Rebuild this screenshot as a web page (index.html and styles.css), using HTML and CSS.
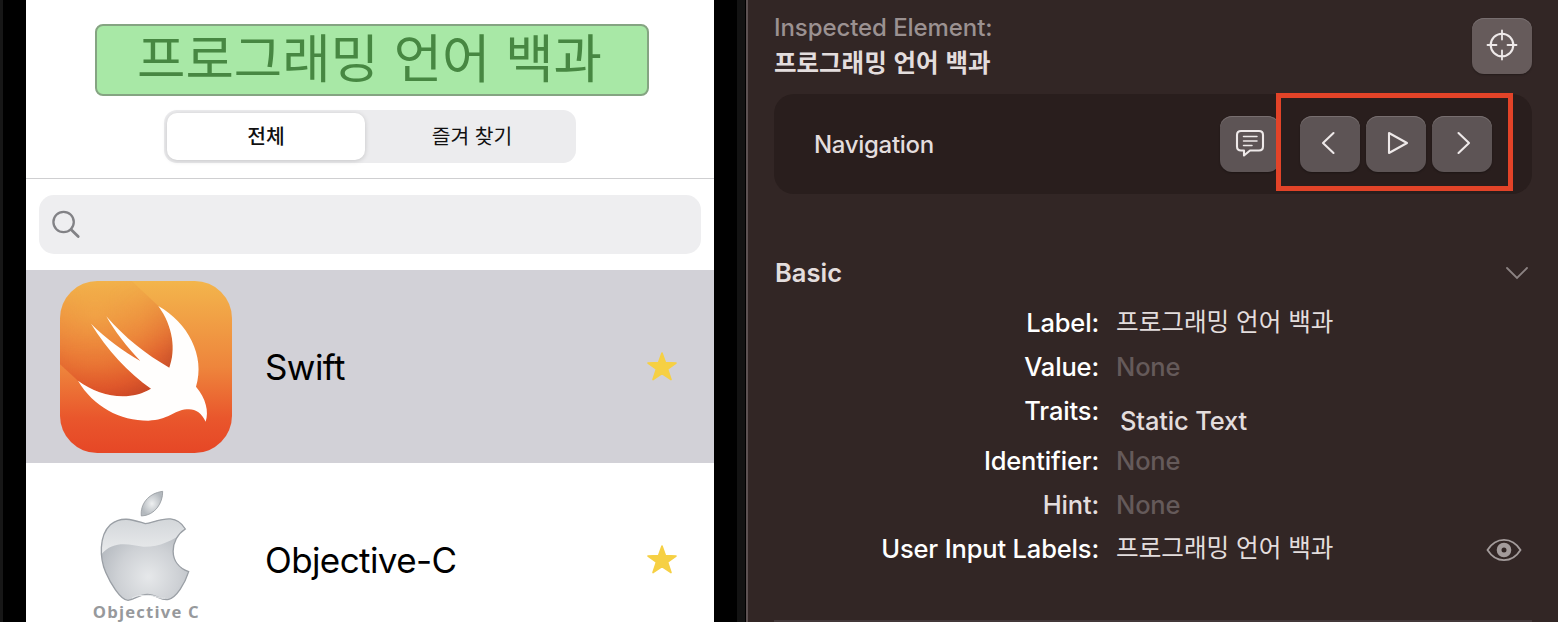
FILE: index.html
```html
<!DOCTYPE html>
<html lang="ko">
<head>
<meta charset="utf-8">
<title>Accessibility Inspector</title>
<link rel="stylesheet" href="styles.css">
</head>
<body>
<main class="app">
  <section class="phone">
    <div class="screen">
      <header class="top">
        <h1 class="title"><span>프로그래밍 언어 백과</span></h1>
        <div class="segments">
          <div class="segment active">전체</div>
          <div class="segment other">즐겨 찾기</div>
        </div>
      </header>
      <div class="search-wrap">
        <div class="search">
          <svg width="30" height="30" viewBox="0 0 30 30" fill="none" stroke="#828286" stroke-width="2.3" stroke-linecap="round"><circle cx="12.6" cy="12" r="10.2"/><path d="M20 19.400L27.200 26.400" stroke-width="2.8"/></svg>
        </div>
      </div>
      <div class="row selected">
        <svg class="logo" viewBox="60 33 516 516">
          <defs>
            <linearGradient id="sw" x1="0" y1="0" x2="0" y2="1"><stop offset="0" stop-color="#f3b54c"/><stop offset=".5" stop-color="#ee853c"/><stop offset=".8" stop-color="#e9562c"/><stop offset="1" stop-color="#e64726"/></linearGradient>
            <radialGradient id="sh" gradientUnits="userSpaceOnUse" cx="165" cy="135" r="275"><stop offset="0" stop-color="#e05a20" stop-opacity="0"/><stop offset=".5" stop-color="#dd4a20" stop-opacity=".25"/><stop offset=".8" stop-color="#d23c20" stop-opacity=".5"/><stop offset="1" stop-color="#b43420" stop-opacity=".65"/></radialGradient>
            <linearGradient id="fade" x1="0" y1="0" x2="0" y2="1"><stop offset="0" stop-color="#fff" stop-opacity=".15"/><stop offset=".6" stop-color="#fff"/></linearGradient>
            <mask id="mk"><rect x="60" y="33" width="516" height="370" fill="url(#fade)"/></mask>
            <clipPath id="tile"><rect x="60" y="33" width="516" height="516" rx="112"/></clipPath>
          </defs>
          <g clip-path="url(#tile)">
            <rect x="60" y="33" width="516" height="516" fill="url(#sw)"/>
            <path mask="url(#mk)" fill="url(#sh)" d="M60 33H275L355 108C400 170 408 240 388 293L333 356C260 400 170 375 114 332L60 283Z"/>
            <path fill="#fffefd" d="M355 108C443 157 497 258 468 350C498 385 507 425 497 455C484 427 464 415 440 418C400 422 385 450 325 452C240 452 160 410 114 332C180 381 268 395 333 356C265 308 200 238 153 161C200 208 250 243 301 273C260 230 224 184 199 139C253 202 320 255 388 293C408 240 400 170 355 108Z"/>
          </g>
        </svg>
        <span class="name swift">Swift</span>
        <svg class="star" viewBox="0 0 32 31"><path d="M16 2L19.4 11.6L30 12L21.6 18.2L25 28.6L16 22.5L7 28.6L10.4 18.2L2 12L12.6 11.6Z"/></svg>
      </div>
      <div class="row">
        <svg class="logo" viewBox="0 12 516 516">
          <defs>
            <radialGradient id="ap" gradientUnits="userSpaceOnUse" cx="265" cy="320" r="165"><stop offset="0" stop-color="#e6e8ea"/><stop offset=".55" stop-color="#ced1d5"/><stop offset="1" stop-color="#b3b8be"/></radialGradient>
            <linearGradient id="gl" x1="0" y1="0" x2="0" y2="1"><stop offset="0" stop-color="#cdd1d5"/><stop offset="1" stop-color="#eff0f1"/></linearGradient>
            <radialGradient id="lf"><stop offset="0" stop-color="#eef0f1"/><stop offset="1" stop-color="#b4b9be"/></radialGradient>
            <clipPath id="body"><path d="M256 161C292 156 343 123 376 177C329 207 322 282 386 305C375 340 350 382 326 388C302 394 291 373 262 373C238 373 226 388 204 391C181 391 149 335 137 307C119 265 116 197 151 164C188 134 228 153 256 161Z"/></clipPath>
          </defs>
          <path d="M244 138C240 105 263 70 308 64C309 99 284 137 244 138Z" fill="url(#lf)" stroke="#969ba0" stroke-width="2.5"/>
          <g clip-path="url(#body)">
            <rect x="115" y="135" width="280" height="265" fill="url(#ap)"/>
            <path d="M110 275C145 205 205 223 250 230C300 231 332 214 390 178V120H110Z" fill="url(#gl)"/>
          </g>
          <path d="M256 161C292 156 343 123 376 177C329 207 322 282 386 305C375 340 350 382 326 388C302 394 291 373 262 373C238 373 226 388 204 391C181 391 149 335 137 307C119 265 116 197 151 164C188 134 228 153 256 161Z" fill="none" stroke="#9a9fa5" stroke-width="4"/>
          <path d="M216 384C234 374 246 377 266 376C290 377 301 388 316 384" fill="none" stroke="#e6e8ea" stroke-width="3"/>
          <text class="caption" x="98" y="443" textLength="318">Objective C</text>
        </svg>
        <span class="name objc">Objective-C</span>
        <svg class="star" viewBox="0 0 32 31"><path d="M16 2L19.4 11.6L30 12L21.6 18.2L25 28.6L16 22.5L7 28.6L10.4 18.2L2 12L12.6 11.6Z"/></svg>
      </div>
    </div>
  </section>
  <section class="inspector">
    <header class="inspected">
      <div>
        <div class="muted">Inspected Element:</div>
        <div class="element">프로그래밍 언어 백과</div>
      </div>
      <button class="btn target"><svg width="32" height="32" viewBox="0 0 32 32"><circle cx="16" cy="16" r="11.3"/><path d="M16 1.500V10.500M16 21.500V30.500M1.500 16H10.500M21.500 16H30.500" stroke-width="1.8"/></svg></button>
    </header>
    <div class="nav">
      <span class="nav-label">Navigation</span>
      <button class="btn"><svg width="30" height="28" viewBox="0 0 30 28"><path d="M6 2H24Q28 2 28 6V17.500Q28 21.500 24 21.500H15L9 26.500V21.500H6Q2 21.500 2 17.500V6Q2 2 6 2Z"/><path d="M8.500 7.600H22M8.500 12H22M8.500 16.400H17" stroke-width="1.500"/></svg></button>
      <div class="steps">
        <button class="btn prev"><svg width="14" height="24" viewBox="0 0 14 24"><path d="M12.500 2L2 12L12.500 22"/></svg></button>
        <button class="btn play"><svg width="22" height="24" viewBox="0 0 22 24"><path d="M2 2V22L20 12Z"/></svg></button>
        <button class="btn next"><svg width="14" height="24" viewBox="0 0 14 24"><path d="M1.500 2L12 12L1.500 22"/></svg></button>
        <div class="highlight"></div>
      </div>
    </div>
    <div class="basic-head">
      <h2 class="basic">Basic</h2>
      <svg width="24" height="14" viewBox="0 0 24 14" fill="none" stroke="#8c8383" stroke-width="1.800" stroke-linecap="round"><path d="M2 2L12 12L22 2"/></svg>
    </div>
    <dl class="props">
      <dt>Label:</dt><dd class="ko"><span>프로그래밍 언어 백과</span></dd>
      <dt>Value:</dt><dd class="none">None</dd>
      <dt>Traits:</dt><dd class="trait">Static Text</dd>
      <dt>Identifier:</dt><dd class="none">None</dd>
      <dt class="soft">Hint:</dt><dd class="none">None</dd>
      <dt>User Input Labels:</dt><dd class="ko"><span>프로그래밍 언어 백과</span>
        <svg width="36" height="24" viewBox="0 0 36 24"><path d="M1.500 12C10 -1.500 26 -1.500 34.500 12C26 25.500 10 25.500 1.500 12Z" fill="none" stroke="#a39b9b" stroke-width="1.800"/><circle cx="18" cy="12" r="4.900" fill="none" stroke="#a39b9b" stroke-width="4.800"/></svg>
      </dd>
    </dl>
    <div class="divider"></div>
  </section>
</main>
</body>
</html>
```
FILE: styles.css
```css
* { box-sizing: border-box; }
body { margin: 0; background: #000; font-family: Inter, "Noto Sans CJK KR", sans-serif; }
.app { display: flex; width: 1558px; height: 622px; overflow: hidden; }

.phone { flex: none; width: 746px; height: 622px; padding-left: 23px; border-left: 3px solid #171717; background: linear-gradient(90deg, #000 734px, #131313 734px, #131313 742px, #000 742px); overflow: hidden; }
.screen { width: 688px; height: 622px; background: #fff; overflow: hidden; }
.top { display: flex; flex-direction: column; align-items: center; height: 179px; padding-top: 24px; border-bottom: 1px solid #cfcfd1; }
.title { display: flex; align-items: flex-start; justify-content: center; width: 554px; height: 72px; margin: 0 0 0 3px; border: 2px solid #85a482; border-radius: 8px; background: #a8e8a6; color: #478742; font: 400 52.6px/58px "Noto Sans CJK KR", sans-serif; white-space: nowrap; }
.title span { padding-right: 4px; }
.segments { display: flex; width: 412px; height: 53px; margin-top: 14px; padding: 3px; border-radius: 13px; background: #ececee; }
.segment { display: flex; align-items: center; justify-content: center; flex: 1; height: 47px; padding-bottom: 4px; border-radius: 10px; color: #111; font: 400 20.4px/28px "Noto Sans CJK KR", sans-serif; }
.segment.active { flex: none; width: 198px; background: #fff; font-weight: 500; box-shadow: 0 1px 5px rgba(0, 0, 0, .17); }
.segment.other { padding-left: 6px; }
.search-wrap { height: 91px; padding: 16px 13px 0; }
.search { display: flex; align-items: center; height: 59px; padding-left: 12px; border-radius: 15px; background: #eeeef0; }
.row { display: flex; align-items: center; height: 193px; padding: 0 36.5px 0 34px; }
.row.selected { background: #d2d1d7; }
.logo { flex: none; width: 172px; height: 172px; }
.caption { font: 700 50px "Open Sans", sans-serif; fill: #97999c; }
.name { margin-left: 33px; color: #000; font-size: 35px; line-height: 44px; letter-spacing: -.6px; }
.star { width: 32px; height: 31px; margin-left: auto; fill: #f6d044; stroke: #f6d044; stroke-width: 1.6; stroke-linejoin: round; }

.inspector { width: 812px; height: 622px; padding: 12px 26px 0; border-left: 2px solid #5c5152; background: #322625; color: #e3dddd; font-size: 25.5px; }
.inspected { display: flex; justify-content: space-between; height: 82px; }
.muted { height: 31px; color: #9b9191; font-size: 24px; font-weight: 450; line-height: 32px; letter-spacing: -.08px; }
.element { font: 700 24.5px/37px "Noto Sans CJK KR", sans-serif; }
.btn { display: flex; align-items: center; justify-content: center; flex: none; width: 60px; height: 56px; margin: 0; padding: 0 0 2px; border: 0; border-radius: 12px; background: #5d5455; box-shadow: inset 0 1px 0 #776e6f, 0 1px 2px rgba(0, 0, 0, .3); }
.btn svg { display: block; fill: none; stroke: #eee9e9; stroke-width: 2.1; stroke-linecap: round; stroke-linejoin: round; }
.target { margin-top: 6px; padding-bottom: 3px; background: #665b5b; }
.nav { display: flex; align-items: center; height: 100px; padding: 0 40px; border-radius: 20px; background: #291e1d; }
.nav-label { margin-right: auto; font-size: 24px; font-weight: 450; letter-spacing: -.3px; }
.steps { position: relative; display: flex; gap: 6px; margin-left: 20px; }
.highlight { position: absolute; left: -24px; top: -23px; width: 237px; height: 98px; border: 5px solid #e24328; }
.prev svg { margin-right: 5px; }
.play svg { margin-left: 4px; }
.next svg { margin-left: 3px; }
.basic-head { display: flex; align-items: center; justify-content: space-between; height: 32px; margin-top: 63px; padding: 0 3px 0 1px; }
.basic { margin: 0; font-size: 25.5px; font-weight: 600; line-height: 32px; }
.props { display: grid; grid-template-columns: 325px 1fr; grid-template-rows: 44px 44px 50px 44px 44px 44px; column-gap: 17px; margin: 12px 0 0; line-height: 44px; font-weight: 450; letter-spacing: -.16px; }
.props dt { color: #fff; text-align: right; white-space: nowrap; }
.props .soft { color: #e3dddd; }
.props dd { margin: 0; white-space: nowrap; }
.props .none { color: #655a5a; }
.props .trait { padding: 10px 0 0 4px; line-height: 44px; }
.props .ko { display: flex; align-items: center; justify-content: space-between; padding-right: 10px; font-family: "Noto Sans CJK KR", sans-serif; font-size: 24.6px; font-weight: 400; letter-spacing: 0; }
.ko span { line-height: 38px; padding-bottom: 6px; }
.ko svg { margin-top: 2px; }
.divider { height: 2px; margin-top: 49px; background: #433839; }
```
